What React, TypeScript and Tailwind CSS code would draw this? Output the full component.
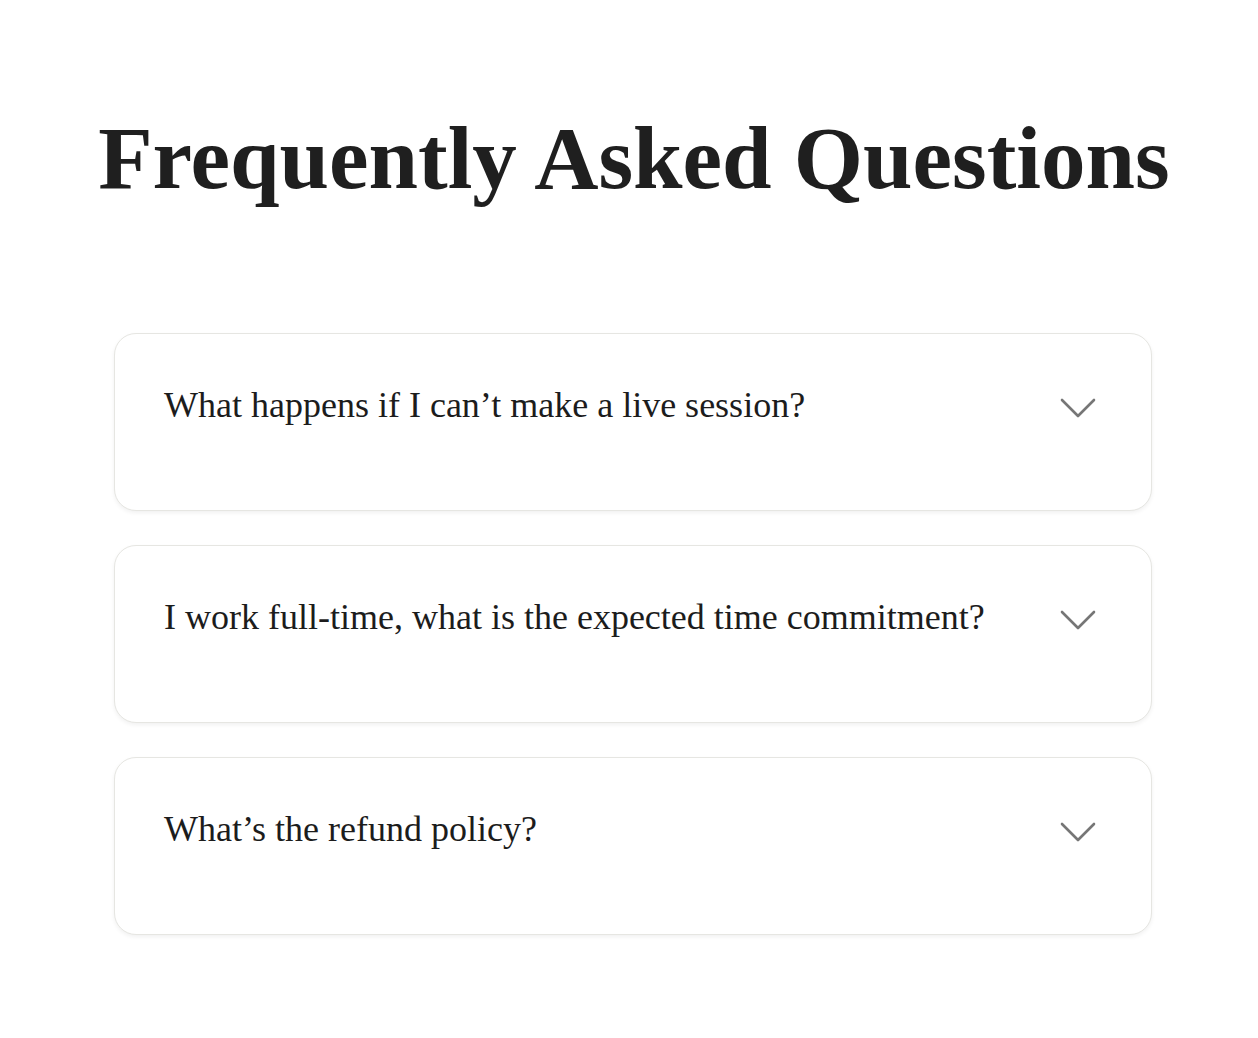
const questions = [
  "What happens if I can\u2019t make a live session?",
  "I work full-time, what is the expected time commitment?",
  "What\u2019s the refund policy?",
]

function Chevron() {
  return (
    <svg width="36" height="20" viewBox="0 0 36 20" fill="none" className="shrink-0">
      <path d="M2 2 L18 18 L34 2" stroke="#767676" strokeWidth="2.6" strokeLinecap="round" strokeLinejoin="round" />
    </svg>
  )
}

function FaqItem({ question }: { question: string }) {
  return (
    <div className="h-[178px] rounded-[22px] border border-[#e6e6e2] bg-white shadow-[0_2px_4px_rgba(0,0,0,0.06)] pl-[49px] pr-[55px] pt-[51px]">
      <div className="flex items-start justify-between">
        <span className="text-[36px] leading-[40px] text-[#1c1c1c]">{question}</span>
        <div className="pt-[13px]">
          <Chevron />
        </div>
      </div>
    </div>
  )
}

export default function App() {
  return (
    <div className="min-h-[1038px] bg-white font-['Liberation_Serif',serif]">
      <div className="flex justify-center pl-[10px] pt-[108px]">
        <h1 className="whitespace-nowrap text-[89px] leading-[100px] font-bold text-[#1f1f1f]">
          Frequently Asked Questions
        </h1>
      </div>
      <div className="w-[1038px] ml-[114px] mt-[125px] flex flex-col gap-[34px]">
        {questions.map((q) => (
          <FaqItem key={q} question={q} />
        ))}
      </div>
    </div>
  )
}
